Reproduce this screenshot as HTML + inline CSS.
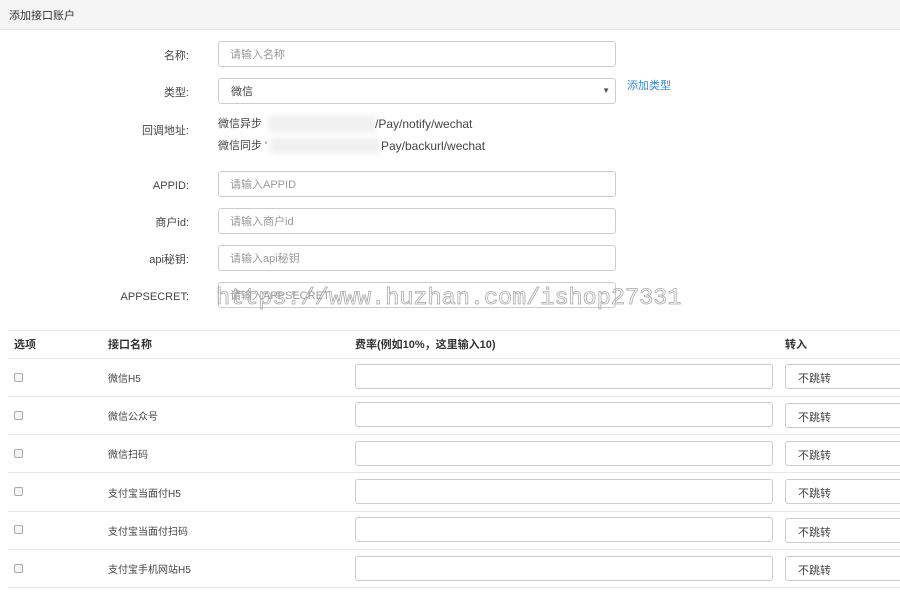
<!DOCTYPE html>
<html><head><meta charset="utf-8"><style>
*{box-sizing:border-box;margin:0;padding:0}
body{width:900px;height:598px;overflow:hidden;background:#fff;font-family:"Liberation Sans","Noto Sans CJK SC",sans-serif;font-size:12px;color:#333;position:relative;line-height:1.2}
.hd{position:absolute;left:0;top:0;width:900px;height:30px;background:#f5f5f5;border-bottom:1px solid #e5e5e5;padding:10px 0 0 9px;font-size:11px;color:#333}
.lbl{position:absolute;right:711px;font-size:11px;color:#444;text-align:right}
.inp{position:absolute;left:218px;width:398px;height:26px;border:1px solid #ccc;border-radius:3px;padding:7px 0 0 11px;font-size:11px;color:#999}
.txt{position:absolute;left:218px;font-size:12px;color:#444}
.blur{position:absolute;height:16px;background:#f0f0f0;filter:blur(3px)}
.wm{position:absolute;left:216px;top:285px;font-family:"Liberation Mono",monospace;font-size:23.5px;color:transparent;-webkit-text-stroke:0.8px #aaa;white-space:nowrap}
.line{position:absolute;left:8px;width:892px;height:1px;background:#e6e6e6}
.th{position:absolute;top:339px;font-weight:bold;font-size:11px;color:#333}
.cb{position:absolute;left:14px;width:9px;height:9px;border:1px solid #aaa;border-radius:2px;background:#f4f4f4}
.nm{position:absolute;left:108px;font-size:10px;color:#444}
.ri{position:absolute;left:355px;width:418px;height:25px;border:1px solid #ccc;border-radius:3px}
.sl{position:absolute;left:785px;width:130px;height:25px;border:1px solid #ccc;border-radius:3px;padding:8px 0 0 12px;font-size:11px;color:#444}
</style></head><body>
<div class="hd">添加接口账户</div>
<div class="lbl" style="top:50px">名称:</div><div class="inp" style="top:41px">请输入名称</div>
<div class="lbl" style="top:87px">类型:</div><div class="inp" style="top:78px;color:#444;padding-left:12px">微信<span style="position:absolute;right:5px;top:7px;font-size:8px;color:#555">▼</span></div>
<div style="position:absolute;left:627px;top:80px;font-size:11px;color:#3a8ad6">添加类型</div>
<div class="lbl" style="top:125px">回调地址:</div>
<div class="txt" style="top:118px;font-size:11px">微信异步</div><div class="blur" style="left:268px;top:116px;width:108px"></div><div class="txt" style="left:375px;top:117px">/Pay/notify/wechat</div>
<div class="txt" style="top:140px;font-size:11px">微信同步 '</div><div class="blur" style="left:270px;top:138px;width:110px"></div><div class="txt" style="left:381px;top:139px">Pay/backurl/wechat</div>
<div class="lbl" style="top:180px">APPID:</div><div class="inp" style="top:171px">请输入APPID</div>
<div class="lbl" style="top:217px">商户id:</div><div class="inp" style="top:208px">请输入商户id</div>
<div class="lbl" style="top:254px">api秘钥:</div><div class="inp" style="top:245px">请输入api秘钥</div>
<div class="lbl" style="top:291px">APPSECRET:</div><div class="inp" style="top:282px">请输入APPSECRET</div>
<div class="wm">https://www.huzhan.com/ishop27331</div>
<div class="line" style="top:330px"></div>
<div class="th" style="left:14px">选项</div><div class="th" style="left:108px">接口名称</div><div class="th" style="left:355px">费率(例如10%，这里输入10)</div><div class="th" style="left:785px">转入</div>
<div class="line" style="top:358px"></div>
<div class="cb" style="top:373px"></div><div class="nm" style="top:374px">微信H5</div><div class="ri" style="top:364px"></div><div class="sl" style="top:364px">不跳转</div>
<div class="line" style="top:396px"></div>
<div class="cb" style="top:411px"></div><div class="nm" style="top:412px">微信公众号</div><div class="ri" style="top:402px"></div><div class="sl" style="top:403px">不跳转</div>
<div class="line" style="top:434px"></div>
<div class="cb" style="top:449px"></div><div class="nm" style="top:450px">微信扫码</div><div class="ri" style="top:441px"></div><div class="sl" style="top:441px">不跳转</div>
<div class="line" style="top:472px"></div>
<div class="cb" style="top:487px"></div><div class="nm" style="top:489px">支付宝当面付H5</div><div class="ri" style="top:479px"></div><div class="sl" style="top:479px">不跳转</div>
<div class="line" style="top:511px"></div>
<div class="cb" style="top:525px"></div><div class="nm" style="top:527px">支付宝当面付扫码</div><div class="ri" style="top:517px"></div><div class="sl" style="top:518px">不跳转</div>
<div class="line" style="top:549px"></div>
<div class="cb" style="top:564px"></div><div class="nm" style="top:565px">支付宝手机网站H5</div><div class="ri" style="top:556px"></div><div class="sl" style="top:556px">不跳转</div>
<div class="line" style="top:587px"></div>
</body></html>
